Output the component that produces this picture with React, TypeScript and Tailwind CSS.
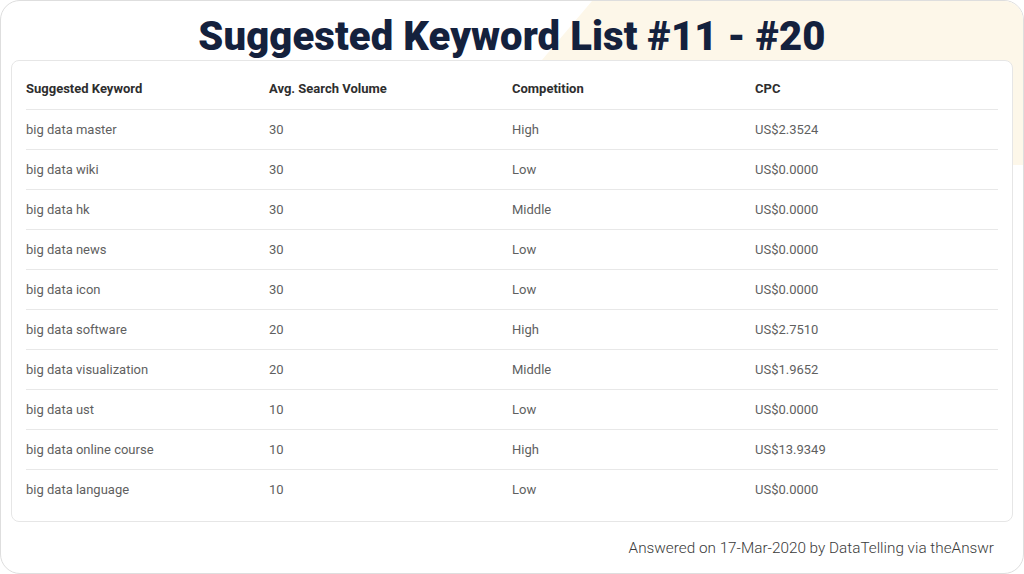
const rows = [
  { keyword: 'big data master', volume: '30', competition: 'High', cpc: 'US$2.3524' },
  { keyword: 'big data wiki', volume: '30', competition: 'Low', cpc: 'US$0.0000' },
  { keyword: 'big data hk', volume: '30', competition: 'Middle', cpc: 'US$0.0000' },
  { keyword: 'big data news', volume: '30', competition: 'Low', cpc: 'US$0.0000' },
  { keyword: 'big data icon', volume: '30', competition: 'Low', cpc: 'US$0.0000' },
  { keyword: 'big data software', volume: '20', competition: 'High', cpc: 'US$2.7510' },
  { keyword: 'big data visualization', volume: '20', competition: 'Middle', cpc: 'US$1.9652' },
  { keyword: 'big data ust', volume: '10', competition: 'Low', cpc: 'US$0.0000' },
  { keyword: 'big data online course', volume: '10', competition: 'High', cpc: 'US$13.9349' },
  { keyword: 'big data language', volume: '10', competition: 'Low', cpc: 'US$0.0000' },
];

export default function App() {
  return (
    <div className="w-[1024px] h-[574px] bg-white" style={{ fontFamily: 'Roboto, "Liberation Sans", sans-serif' }}>
      <div className="relative w-full h-full rounded-[20px] border border-[#dedede] bg-white overflow-hidden flex flex-col">
        {/* beige decoration behind the title */}
        <svg className="absolute top-0 left-0" width="1024" height="574" viewBox="0 0 1024 574">
          <polygon points="591,0 1024,0 1024,164 452,164" fill="#fdf7e9" />
        </svg>

        <h1 className="relative text-center text-[40px] leading-none font-black text-[#14213d] pt-[16px] pb-[3px] tracking-[0.1px]">
          Suggested Keyword List #11 - #20
        </h1>

        <div className="relative mx-[10px] rounded-[8px] border border-[#e6e6e6] bg-white px-[14px] pb-[11px]">
          <div className="grid grid-cols-4 h-[49px] items-center pt-[8px] border-b border-[#e8e8e8] text-[13px] font-bold text-[#2e2e2e]">
            <div>Suggested Keyword</div>
            <div>Avg. Search Volume</div>
            <div>Competition</div>
            <div>CPC</div>
          </div>
          {rows.map((r, i) => (
            <div
              key={r.keyword}
              className={`grid grid-cols-4 h-[40px] items-center text-[13px] text-[#5f5f5f] ${i < rows.length - 1 ? 'border-b border-[#e8e8e8]' : ''}`}
            >
              <div>{r.keyword}</div>
              <div>{r.volume}</div>
              <div>{r.competition}</div>
              <div>{r.cpc}</div>
            </div>
          ))}
        </div>

        <div className="relative text-right pr-[29px] pt-[15px] text-[15.3px] font-light text-[#3a3a3a]">
          Answered on 17-Mar-2020 by DataTelling via theAnswr
        </div>
      </div>
    </div>
  );
}
